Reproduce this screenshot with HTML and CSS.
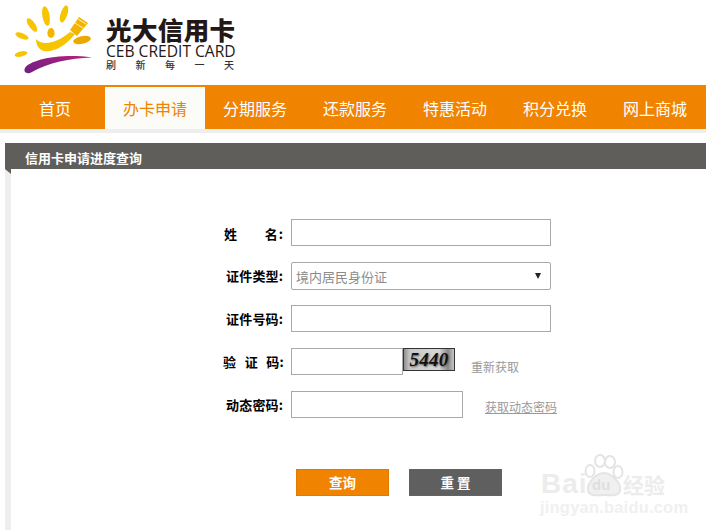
FILE: index.html
```html
<!DOCTYPE html>
<html lang="zh-CN">
<head>
<meta charset="utf-8">
<title>信用卡申请进度查询</title>
<link rel="stylesheet" href="styles.css">
</head>
<body>
<header class="header">
  <svg class="logo-mark" width="100" height="80" viewBox="0 0 100 80" aria-hidden="true">
    <defs>
      <linearGradient id="swoosh" x1="0" y1="1" x2="1" y2="0">
        <stop offset="0" stop-color="#6f2180"/>
        <stop offset="0.6" stop-color="#951f80"/>
        <stop offset="1" stop-color="#b8287a"/>
      </linearGradient>
    </defs>
    <ellipse cx="46" cy="16" rx="3.6" ry="10" transform="rotate(-10 46 16)" fill="#f6c400"/>
    <ellipse cx="64" cy="14" rx="3.4" ry="9" transform="rotate(18 64 14)" fill="#f6c400"/>
    <ellipse cx="32" cy="25" rx="3.2" ry="8" transform="rotate(-35 32 25)" fill="#f6c400"/>
    <ellipse cx="22" cy="36" rx="7" ry="2.8" transform="rotate(22 22 36)" fill="#f6c400"/>
    <ellipse cx="21" cy="54" rx="6.5" ry="2.6" transform="rotate(-12 21 54)" fill="#f6c400"/>
    <ellipse cx="51" cy="33" rx="3.6" ry="5" fill="#f3b700"/>
    <ellipse cx="82" cy="40" rx="9" ry="3.8" transform="rotate(-12 82 40)" fill="#eaa800"/>
    <path d="M36 39 C42 46 56 44 70 32 L75 34 C66 46 52 53 44 51 C39 50 36 45 36 39 Z" fill="#f6c400"/>
    <path d="M70 30 L79 17 L88 23 L77 36 Z" fill="#f3b400"/>
    <path d="M75 23 L83 28 M78 19 L86 24" stroke="#fff" stroke-width="0.8" fill="none"/>
    <path d="M25 68 C30 60 60 53 92 57.5 C70 58 48 63 32 72 C27 75 23 72 25 68 Z" fill="url(#swoosh)"/>
  </svg>
  <div class="logo-text">
    <div class="logo-cn">光大信用卡</div>
    <div class="logo-en">CEB CREDIT CARD</div>
    <div class="logo-slogan"><span>刷</span><span>新</span><span>每</span><span>一</span><span>天</span></div>
  </div>
</header>

<nav class="nav">
  <a class="nav-item">首页</a>
  <a class="nav-item active">办卡申请</a>
  <a class="nav-item">分期服务</a>
  <a class="nav-item">还款服务</a>
  <a class="nav-item">特惠活动</a>
  <a class="nav-item">积分兑换</a>
  <a class="nav-item">网上商城</a>
</nav>
<div class="nav-rule"></div>

<main class="panel">
  <h1 class="panel-title">信用卡申请进度查询</h1>
  <div class="panel-body">
    <span class="corner"></span>
    <form class="form">
      <div class="row">
        <label class="label label-name"><span>姓</span><span>名:</span></label>
        <input class="field field-full" type="text">
      </div>
      <div class="row">
        <label class="label">证件类型:</label>
        <div class="field field-full select"><span>境内居民身份证</span><i class="caret"></i></div>
      </div>
      <div class="row">
        <label class="label">证件号码:</label>
        <input class="field field-full" type="text">
      </div>
      <div class="row row-top">
        <label class="label label-code"><span>验</span><span>证</span><span>码:</span></label>
        <input class="field field-code" type="text">
        <div class="captcha">5440</div>
        <a class="link-refresh">重新获取</a>
      </div>
      <div class="row">
        <label class="label">动态密码:</label>
        <input class="field field-dyn" type="text">
        <a class="link-dyn">获取动态密码</a>
      </div>
      <div class="actions">
        <button class="btn btn-primary" type="button">查询</button>
        <button class="btn btn-dark" type="button">重 置</button>
      </div>
    </form>
  </div>
</main>

<div class="watermark">
  <span class="wm-bai">Bai</span>
  <svg class="wm-paw" width="44" height="44" viewBox="0 0 44 44" aria-hidden="true">
    <g fill="none" stroke="#e4e4e4" stroke-width="2">
      <ellipse cx="7" cy="17" rx="4.5" ry="6"/>
      <ellipse cx="17" cy="7" rx="5" ry="6"/>
      <ellipse cx="27" cy="8" rx="5" ry="6"/>
      <ellipse cx="35" cy="18" rx="4.5" ry="6"/>
      <path d="M21 19 C13 19 3 30 5 37 C7 43 15 41 21 41 C27 41 35 43 37 37 C39 30 29 19 21 19 Z" fill="#f0f0f0"/>
    </g>
  </svg>
  <span class="wm-du">du</span>
  <span class="wm-jy">经验</span>
  <div class="wm-url">jingyan.baidu.com</div>
</div>
</body>
</html>
```

FILE: styles.css
```css
* { box-sizing: border-box; }
html, body { margin: 0; padding: 0; }
body {
  position: relative;
  width: 706px;
  height: 530px;
  overflow: hidden;
  background: #fff;
  font-family: "Noto Sans CJK SC", "Liberation Sans", sans-serif;
  color: #000;
}

/* Header */
.header { display: flex; height: 85px; }
.logo-mark { display: block; flex: none; margin-right: 6px; }
.logo-text { padding-top: 15px; width: 130px; }
.logo-cn {
  font-size: 25.5px;
  font-weight: 900;
  line-height: 28px;
  color: #231815;
  white-space: nowrap;
  letter-spacing: 0.4px;
}
.logo-en {
  font-family: "Open Sans", "Liberation Sans", sans-serif;
  font-size: 15.6px;
  line-height: 16px;
  color: #231815;
  white-space: nowrap;
}
.logo-slogan {
  display: flex;
  justify-content: space-between;
  width: 128px;
  font-size: 10px;
  font-weight: 500;
  line-height: 12px;
  color: #333;
}

/* Nav */
.nav {
  display: flex;
  height: 44px;
  padding: 2px 0 0 5px;
  background: #f08300;
}
.nav-item {
  display: block;
  flex: none;
  width: 100px;
  height: 42px;
  padding-top: 1px;
  font-size: 16px;
  line-height: 40px;
  text-align: center;
  color: #fff;
}
.nav-item.active { background: #fbfbf8; color: #f08300; }
.nav-rule { height: 4px; background: #eee; }

/* Panel */
.panel { margin: 10px 0 0 5px; }
.panel-title {
  margin: 0;
  height: 26px;
  padding-left: 20px;
  background: #5f5e5b;
  color: #fff;
  font-size: 13px;
  font-weight: 700;
  line-height: 30px;
}
.panel-body {
  position: relative;
  height: 361px;
  border-left: 6px solid #eee;
}
.corner {
  position: absolute;
  left: -6px;
  top: 0;
  width: 0;
  height: 0;
  border-top: 5px solid #5f5e5b;
  border-left: 6px solid transparent;
}

/* Form */
.form { padding-top: 50px; }
.row {
  display: flex;
  align-items: flex-start;
  height: 28px;
  margin-bottom: 15px;
}
.label {
  flex: none;
  display: block;
  width: 207px;
  margin: 0 7px 0 66px;
  padding-left: 149px;
  font-size: 13px;
  font-weight: 700;
  line-height: 28px;
  letter-spacing: 0.2px;
  white-space: nowrap;
}
.label-name, .label-code { display: flex; justify-content: space-between; }
.label-name { padding-left: 147px; line-height: 30px; letter-spacing: 1px; }
.label-code { padding-left: 146px; }
.field {
  display: block;
  flex: none;
  height: 27px;
  margin: 0;
  padding: 0 4px;
  background: #fff;
  border: 1px solid #a9a9a9;
  border-radius: 0;
  outline: none;
}
.field-full { width: 260px; }
.field-code { width: 112px; }
.field-dyn { width: 172px; }
.select {
  height: 28px;
  display: flex;
  align-items: center;
  justify-content: space-between;
  padding: 0 9px 0 4px;
  border-radius: 2px;
  font-size: 13px;
  color: #8b8b8b;
}
.caret {
  width: 0;
  height: 0;
  border-left: 3px solid transparent;
  border-right: 3px solid transparent;
  border-top: 6px solid #222;
}
.captcha {
  flex: none;
  width: 52px;
  height: 23px;
  border: 1px solid #333;
  background: linear-gradient(90deg, #8f8f8f 0, #c9c9c9 12%, #d8d8d8 70%, #8a8a8a 88%, #c6c6c6 100%);
  font-family: "Liberation Serif", serif;
  font-size: 19px;
  font-style: italic;
  font-weight: 700;
  line-height: 21px;
  text-align: center;
  letter-spacing: 0.3px;
  color: #111;
  text-shadow: 1px 1px 2px #555;
}
.link-refresh {
  margin: 9px 0 0 16px;
  font-size: 12px;
  line-height: 20px;
  color: #999;
}
.link-dyn {
  margin: 6px 0 0 22px;
  font-size: 12px;
  line-height: 20px;
  color: #999;
  text-decoration: underline;
}
.actions {
  display: flex;
  gap: 20px;
  margin: 50px 0 0 285px;
}
.btn {
  width: 93px;
  height: 27px;
  margin: 0;
  padding: 0;
  border: 1px solid;
  border-radius: 0;
  color: #fff;
  font-family: inherit;
  font-size: 13.5px;
  font-weight: 700;
  line-height: 25px;
}
.btn-primary { background: #f08300; border-color: #e07a00; }
.btn-dark { background: #5f5f5f; border-color: #66625c; }

/* Watermark: floats over the page */
.watermark {
  position: absolute;
  left: 540px;
  top: 454px;
  width: 130px;
  height: 62px;
}
.wm-bai, .wm-du, .wm-jy, .wm-url, .wm-paw { position: absolute; }
.wm-bai {
  left: 1px;
  top: 15px;
  font-family: "Liberation Sans", sans-serif;
  font-size: 28px;
  font-weight: 700;
  line-height: 30px;
  letter-spacing: 1px;
  color: #ececec;
}
.wm-paw { left: 43px; top: 0; }
.wm-du {
  left: 52px;
  top: 23px;
  font-family: "Liberation Sans", sans-serif;
  font-size: 15px;
  font-weight: 700;
  line-height: 16px;
  color: #dfdfdf;
}
.wm-jy {
  left: 83px;
  top: 17px;
  font-size: 21px;
  font-weight: 700;
  line-height: 26px;
  color: #ececec;
  white-space: nowrap;
}
.wm-url {
  left: 0;
  top: 44px;
  font-family: "Liberation Sans", sans-serif;
  font-size: 16.5px;
  font-weight: 700;
  line-height: 18px;
  letter-spacing: 0.2px;
  color: #f0f0f0;
  white-space: nowrap;
}
```
